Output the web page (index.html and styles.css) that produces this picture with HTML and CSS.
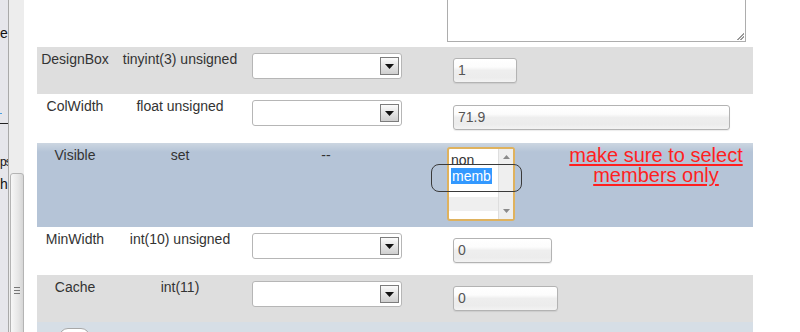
FILE: index.html
```html
<!DOCTYPE html>
<html>
<head>
<meta charset="utf-8">
<link rel="stylesheet" href="styles.css">
</head>
<body>
<div class="page">
  <aside class="side">
    <div class="side-line side-e">e</div>
    <div class="side-blue"></div>
    <div class="side-rule"></div>
    <div class="side-line side-ps">ps</div>
    <div class="side-line side-h">h</div>
  </aside>
  <div class="vscroll">
    <div class="thumb"><span class="grip"></span></div>
  </div>
  <main class="main">
    <div class="row row-top">
      <div class="cell"></div>
      <div class="cell"></div>
      <div class="cell"></div>
      <div class="cell cell-val">
        <div class="textarea"><span class="resize"></span></div>
      </div>
    </div>

    <div class="row row-grey h47">
      <div class="cell cell-txt">DesignBox</div>
      <div class="cell cell-txt">tinyint(3) unsigned</div>
      <div class="cell cell-sel"><div class="select"><span class="sel-btn"><svg width="9" height="5" viewBox="0 0 9 5"><path d="M0 0h9L4.5 5z" fill="#111"/></svg></span></div></div>
      <div class="cell cell-val"><div class="input w63">1</div></div>
    </div>

    <div class="row h49">
      <div class="cell cell-txt">ColWidth</div>
      <div class="cell cell-txt">float unsigned</div>
      <div class="cell cell-sel"><div class="select"><span class="sel-btn"><svg width="9" height="5" viewBox="0 0 9 5"><path d="M0 0h9L4.5 5z" fill="#111"/></svg></span></div></div>
      <div class="cell cell-val"><div class="input w276">71.9</div></div>
    </div>

    <div class="row row-sel h84">
      <div class="cell cell-txt">Visible</div>
      <div class="cell cell-txt">set</div>
      <div class="cell cell-txt">--</div>
      <div class="cell cell-val cell-list">
        <div class="listbox">
          <div class="opts">
            <div class="opt">non</div>
            <div class="opt"><span class="opt-on">memb</span></div>
            <div class="opt-empty"></div>
          </div>
          <div class="lb-scroll">
            <svg width="7" height="4" viewBox="0 0 7 4"><path d="M0 4h7L3.5 0z" fill="#8a8a8a"/></svg>
            <svg width="7" height="4" viewBox="0 0 7 4"><path d="M0 0h7L3.5 4z" fill="#8a8a8a"/></svg>
          </div>
        </div>
        <div class="note">make sure to select<br>members only</div>
        <div class="ring"></div>
      </div>
    </div>

    <div class="row h48">
      <div class="cell cell-txt">MinWidth</div>
      <div class="cell cell-txt">int(10) unsigned</div>
      <div class="cell cell-sel"><div class="select"><span class="sel-btn"><svg width="9" height="5" viewBox="0 0 9 5"><path d="M0 0h9L4.5 5z" fill="#111"/></svg></span></div></div>
      <div class="cell cell-val"><div class="input w98">0</div></div>
    </div>

    <div class="row row-grey h47">
      <div class="cell cell-txt">Cache</div>
      <div class="cell cell-txt">int(11)</div>
      <div class="cell cell-sel"><div class="select"><span class="sel-btn"><svg width="9" height="5" viewBox="0 0 9 5"><path d="M0 0h9L4.5 5z" fill="#111"/></svg></span></div></div>
      <div class="cell cell-val"><div class="input w104">0</div></div>
    </div>

    <div class="row row-last">
      <div class="cell"><div class="mini-btn"></div></div>
    </div>
  </main>
</div>
</body>
</html>
```

FILE: styles.css
```css
html, body {
  margin: 0;
  padding: 0;
  background: #fff;
  overflow: hidden;
}
body {
  font-family: "Liberation Sans", Arial, sans-serif;
  font-size: 14px;
  color: #333;
}
.page {
  display: flex;
  height: 332px;
  overflow: hidden;
}

/* left cropped panel */
.side {
  width: 8px;
  flex: none;
  background: #e6e6eb;
  border-right: 1px solid #a9a9a9;
  overflow: hidden;
  position: relative;
}
.side-line {
  white-space: nowrap;
  font-size: 14px;
  line-height: 16px;
  color: #111;
}
.side-e { margin-top: 25px; }
.side-blue {
  margin-top: 72px;
  width: 2px;
  height: 1px;
  background: #4aa0e0;
}
.side-rule {
  margin-top: 9px;
  height: 1px;
  background: #222;
}
.side-ps { margin-top: 30px; font-size: 12px; letter-spacing: -1px; }
.side-h { margin-top: 6px; }

/* page scrollbar */
.vscroll {
  width: 15px;
  flex: none;
  background: #ededed;
  position: relative;
}
.thumb {
  position: absolute;
  left: 1px;
  top: 173px;
  width: 12px;
  height: 200px;
  border: 1px solid #b4b4b4;
  border-radius: 3px 3px 0 0;
  background: linear-gradient(90deg, #f7f7f7, #e6e6e6 60%, #d6d6d6);
  display: flex;
  justify-content: center;
}
.grip {
  margin-top: 113px;
  width: 6px;
  height: 5px;
  border-top: 1px solid #777;
  border-bottom: 1px solid #777;
  position: relative;
}
.grip::after {
  content: "";
  position: absolute;
  left: 0;
  right: 0;
  top: 2px;
  height: 1px;
  background: #777;
}

/* main table */
.main {
  padding-left: 13px;
  flex: none;
  width: 716px;
}
.row {
  display: grid;
  grid-template-columns: 76px 134px 158px 1fr;
  height: 47px;
  position: relative;
}
.h47 { height: 47px; }
.h48 { height: 48px; }
.h49 { height: 49px; }
.h84 { height: 84px; }
.row-grey { background: #dedede; }
.row-sel { background: linear-gradient(#ccd6e1, #b5c4d7 9px, #b5c4d7); }
.row-last { background: #d6dee6; height: 20px; }

.cell { min-width: 0; }
.cell-txt {
  text-align: center;
  padding-top: 4px;
  line-height: 16px;
  white-space: nowrap;
}
.cell-sel { padding: 6px 0 0 5px; }
.cell-val { padding: 11px 0 0 48px; }

.row-top { height: 47px; }
.row-top .cell-val {
  padding: 0 0 0 42px;
  display: flex;
  align-items: flex-end;
  height: 42px;
}
.textarea {
  width: 297px;
  height: 60px;
  flex: none;
  border: 1px solid #adadad;
  background: #fff;
  position: relative;
}
.resize {
  position: absolute;
  right: 1px;
  bottom: 1px;
  width: 8px;
  height: 8px;
  background:
    linear-gradient(135deg, transparent 55%, #999 55%, #999 63%, transparent 63%, transparent 75%, #999 75%, #999 83%, transparent 83%);
}

/* select */
.select {
  width: 146px;
  height: 24px;
  border: 1px solid #b6b6b6;
  border-radius: 3px;
  background: #fff;
  display: flex;
  align-items: center;
  justify-content: flex-end;
  padding-right: 2px;
}
.sel-btn {
  width: 17px;
  height: 16px;
  border: 1px solid #7c7c7c;
  background: linear-gradient(#fbfbfb, #e2e2e2 55%, #cfcfcf);
  display: flex;
  align-items: center;
  justify-content: center;
}

/* inputs */
.input {
  height: 23px;
  line-height: 23px;
  border: 1px solid #b3b3b3;
  border-radius: 3px;
  padding-left: 4px;
  box-sizing: content-box;
  color: #555;
  background: linear-gradient(#fff, #fcfcfc 35%, #eeeeee 50%, #ececec 80%, #f3f3f3);
  box-shadow: 0 1px 1px rgba(0,0,0,0.08);
}
.w63 { width: 58px; }
.w276 { width: 271px; }
.w98 { width: 93px; }
.w104 { width: 99px; }

/* listbox */
.cell-list {
  padding: 4px 0 0 42px;
  display: flex;
  align-items: flex-start;
  position: relative;
}
.listbox {
  width: 64px;
  height: 70px;
  border: 2px solid #dfb25e;
  border-radius: 3px;
  background: #fff;
  display: flex;
  flex: none;
}
.opts {
  flex: 1;
  padding: 3px 0 0 2px;
}
.opt {
  line-height: 16px;
  height: 16px;
  color: #333;
}
.opt-on {
  background: #3399ff;
  color: #fff;
  padding: 0 1px;
  display: inline-block;
}
.opt-empty {
  margin-top: 13px;
  margin-left: -2px;
  height: 14px;
  background: #efefef;
}
.lb-scroll {
  width: 14px;
  background: #efefef;
  border-left: 1px solid #dedede;
  display: flex;
  flex-direction: column;
  justify-content: space-between;
  align-items: center;
  padding: 6px 0 6px;
}
.note {
  margin: -2px 0 0 45px;
  width: 192px;
  text-align: center;
  color: #ff1f1f;
  font-size: 20px;
  line-height: 20px;
  text-decoration: underline;
  text-underline-offset: 2px;
  white-space: nowrap;
}
.ring {
  position: absolute;
  left: 26px;
  top: 21px;
  width: 89px;
  height: 26px;
  border: 1.5px solid #3a3a3a;
  border-radius: 8px;
}

.mini-btn {
  margin: 6px 0 0 22px;
  width: 29px;
  height: 20px;
  border: 1px solid #a8a8a8;
  border-radius: 9px;
  background: #fff;
}
```
